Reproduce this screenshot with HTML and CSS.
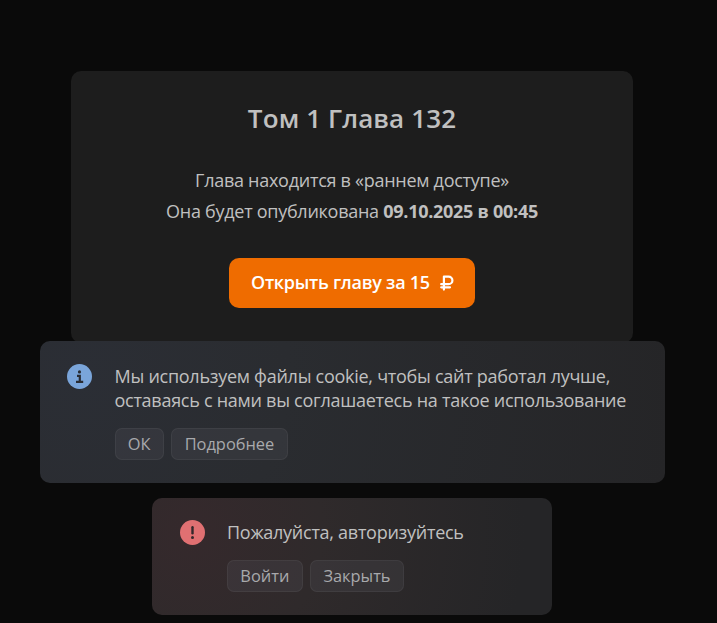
FILE: index.html
```html
<!DOCTYPE html>
<html lang="ru">

<head>
    <meta charset="UTF-8">
    <meta name="viewport" content="width=device-width, initial-scale=1.0">
    <title>Том 1 Глава 132</title>
    <link rel="stylesheet" href="styles.css">
</head>

<body>
    <div class="card">
        <h1 class="card-title">Том 1 Глава 132</h1>
        <p class="card-text">Глава находится в «раннем доступе»</p>
        <p class="card-text">Она будет опубликована <b>09.10.2025 в 00:45</b></p>
        <button class="buy">
            <span class="buy-text">Открыть главу за 15</span>
            <svg class="ruble" width="14" height="16" viewBox="0 0 14 16">
                <path d="M3.9 14.6V1.6H8.6a3.7 3.7 0 0 1 0 7.6H1.2M1.2 12.3H10" />
            </svg>
        </button>
    </div>

    <div class="toasts">
        <div class="toast info">
            <svg class="toast-icon" width="25" height="25" viewBox="0 0 25 25">
                <circle cx="12.5" cy="12.5" r="12.5" fill="#7aa5da" />
                <circle cx="12.5" cy="7.9" r="1.6" fill="#292c33" />
                <path d="M10 11.9H12.8V17.8M9 17.8H16.2" fill="none" stroke="#292c33" stroke-width="2.2" />
            </svg>
            <div class="toast-body">
                <p class="toast-text">Мы используем файлы cookie, чтобы сайт работал лучше,<br>оставаясь с нами вы соглашаетесь на такое использование</p>
                <div class="toast-btns">
                    <button class="btn">ОК</button>
                    <button class="btn">Подробнее</button>
                </div>
            </div>
        </div>

        <div class="toast error">
            <svg class="toast-icon" width="25" height="25" viewBox="0 0 25 25">
                <circle cx="12.5" cy="12.5" r="12.5" fill="#e07072" />
                <path d="M12.5 7.3V13.3" stroke="#33282b" stroke-width="2.4" stroke-linecap="round" />
                <circle cx="12.5" cy="17.6" r="1.5" fill="#33282b" />
            </svg>
            <div class="toast-body">
                <p class="toast-text">Пожалуйста, авторизуйтесь</p>
                <div class="toast-btns">
                    <button class="btn">Войти</button>
                    <button class="btn">Закрыть</button>
                </div>
            </div>
        </div>
    </div>
</body>

</html>
```
FILE: styles.css
```css
* {
    box-sizing: border-box;
}

body {
    margin: 0;
    width: 704px;
    height: 623px;
    overflow: hidden;
    color: #c0c0c0;
    font-family: "Open Sans", sans-serif;
    font-size: 18px;
    letter-spacing: -0.27px;
}

html {
    background-color: #0a0a0a;
}

h1,
p {
    margin: 0;
}

button {
    font-family: inherit;
    border: none;
    cursor: pointer;
}

.card {
    display: flex;
    flex-direction: column;
    align-items: center;
    width: 562px;
    height: 272px;
    margin: 71px auto 0;
    padding-top: 29px;
    border-radius: 10px;
    background-color: #1d1d1d;
}

.card-title {
    margin-bottom: 29px;
    font-size: 26px;
    font-weight: 600;
    line-height: 36px;
    letter-spacing: 0.12px;
}

.card-text {
    line-height: 31px;
    white-space: nowrap;
}

.buy {
    display: flex;
    align-items: center;
    justify-content: space-between;
    width: 246px;
    height: 50px;
    margin-top: 31px;
    padding: 0 21px 0 22px;
    border-radius: 10px;
    background-color: #ef6c00;
    color: #fff;
    font-size: 18px;
    font-weight: 600;
    letter-spacing: -0.27px;
    white-space: nowrap;
}

.buy-text {
    padding-bottom: 2px;
}

.ruble {
    fill: none;
    stroke: #fff;
    stroke-width: 2.2;
    stroke-linecap: round;
    stroke-linejoin: round;
}

/* уведомления поверх карточки */
.toasts {
    position: absolute;
    top: 341px;
    left: 0;
    width: 705px;
    display: flex;
    flex-direction: column;
    align-items: center;
    gap: 15px;
}

.toast {
    display: flex;
    border-radius: 10px;
}

.toast-icon {
    flex-shrink: 0;
}

.info {
    gap: 22.5px;
    width: 625px;
    height: 142px;
    padding: 23px 27px;
    background: radial-gradient(circle at 40px 35px, #2b2e35, #2a2c30 35%, #252527 100%);
}

.error {
    gap: 22px;
    width: 400px;
    height: 117px;
    margin-right: 1px;
    padding: 22px 28px;
    background: radial-gradient(circle at 40px 34px, #35292c, #2f2a2b 35%, #252527 90%);
}

.toast-text {
    line-height: 24px;
    white-space: nowrap;
}

.toast-btns {
    display: flex;
    gap: 7.5px;
    margin-top: 16px;
}

.btn {
    height: 32px;
    padding: 0 12.3px 2px;
    border: 1px solid rgba(255, 255, 255, 0.05);
    border-radius: 7px;
    background-color: rgba(80, 80, 90, 0.27);
    color: #a8a9ac;
    font-size: 16.4px;
    letter-spacing: 0;
}
```
